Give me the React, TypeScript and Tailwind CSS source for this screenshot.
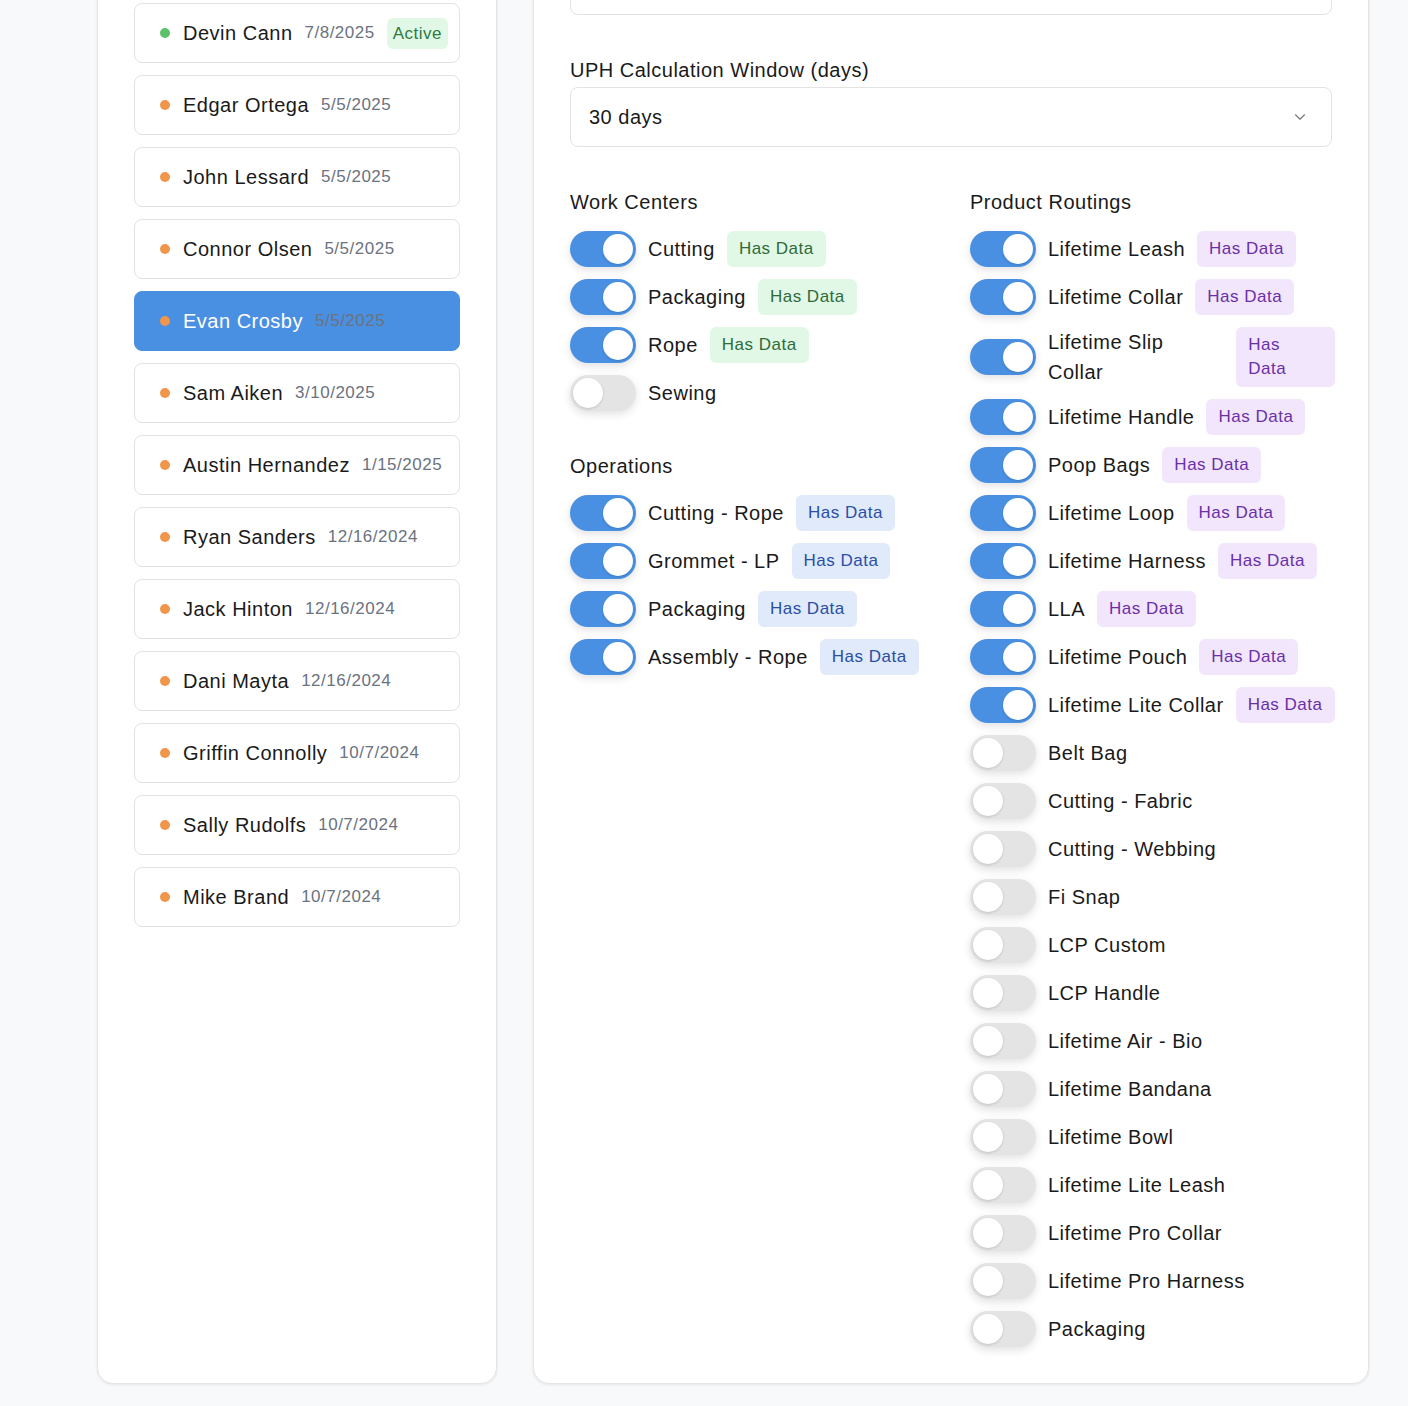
import React, { useState } from 'react';
import { ChevronDown } from 'lucide-react';

type Employee = { name: string; date: string; active?: boolean };

const employees: Employee[] = [
  { name: 'Devin Cann', date: '7/8/2025', active: true },
  { name: 'Edgar Ortega', date: '5/5/2025' },
  { name: 'John Lessard', date: '5/5/2025' },
  { name: 'Connor Olsen', date: '5/5/2025' },
  { name: 'Evan Crosby', date: '5/5/2025' },
  { name: 'Sam Aiken', date: '3/10/2025' },
  { name: 'Austin Hernandez', date: '1/15/2025' },
  { name: 'Ryan Sanders', date: '12/16/2024' },
  { name: 'Jack Hinton', date: '12/16/2024' },
  { name: 'Dani Mayta', date: '12/16/2024' },
  { name: 'Griffin Connolly', date: '10/7/2024' },
  { name: 'Sally Rudolfs', date: '10/7/2024' },
  { name: 'Mike Brand', date: '10/7/2024' },
];

type Item = { name: string; on: boolean };

const workCenters: Item[] = [
  { name: 'Cutting', on: true },
  { name: 'Packaging', on: true },
  { name: 'Rope', on: true },
  { name: 'Sewing', on: false },
];

const operations: Item[] = [
  { name: 'Cutting - Rope', on: true },
  { name: 'Grommet - LP', on: true },
  { name: 'Packaging', on: true },
  { name: 'Assembly - Rope', on: true },
];

const routings: Item[] = [
  { name: 'Lifetime Leash', on: true },
  { name: 'Lifetime Collar', on: true },
  { name: 'Lifetime Slip Collar', on: true },
  { name: 'Lifetime Handle', on: true },
  { name: 'Poop Bags', on: true },
  { name: 'Lifetime Loop', on: true },
  { name: 'Lifetime Harness', on: true },
  { name: 'LLA', on: true },
  { name: 'Lifetime Pouch', on: true },
  { name: 'Lifetime Lite Collar', on: true },
  { name: 'Belt Bag', on: false },
  { name: 'Cutting - Fabric', on: false },
  { name: 'Cutting - Webbing', on: false },
  { name: 'Fi Snap', on: false },
  { name: 'LCP Custom', on: false },
  { name: 'LCP Handle', on: false },
  { name: 'Lifetime Air - Bio', on: false },
  { name: 'Lifetime Bandana', on: false },
  { name: 'Lifetime Bowl', on: false },
  { name: 'Lifetime Lite Leash', on: false },
  { name: 'Lifetime Pro Collar', on: false },
  { name: 'Lifetime Pro Harness', on: false },
  { name: 'Packaging', on: false },
];

const badgeStyles = {
  green: 'bg-[#e2f8e6] text-[#2f6b3b]',
  blue: 'bg-[#e0eafa] text-[#2b4ea6]',
  purple: 'bg-[#f1e6fb] text-[#6a2fa9]',
};

function Toggle({ on }: { on: boolean }) {
  return (
    <div
      className={`shrink-0 w-[66px] h-[36px] rounded-full p-[3px] flex shadow-[0_3px_8px_rgba(0,0,0,0.12)] ${
        on ? 'bg-[#4a90e2] justify-end' : 'bg-[#e4e4e4] justify-start'
      }`}
    >
      <div className="w-[30px] h-[30px] rounded-full bg-white shadow-[0_1px_3px_rgba(0,0,0,0.15)]" />
    </div>
  );
}

function ToggleList({ title, items, color }: { title: string; items: Item[]; color: keyof typeof badgeStyles }) {
  return (
    <div>
      <h3 className="text-[20px] leading-[30px] text-[#1a1a1a] mb-[14px]">{title}</h3>
      <div className="flex flex-col gap-3">
        {items.map((it, i) => (
          <div key={i} className="flex items-center gap-3">
            <Toggle on={it.on} />
            <span className="text-[20px] leading-[30px] text-[#1a1a1a]">{it.name}</span>
            {it.on && (
              <span className={`text-[17px] leading-[24px] px-3 py-1.5 rounded-md ${badgeStyles[color]}`}>
                Has Data
              </span>
            )}
          </div>
        ))}
      </div>
    </div>
  );
}

export default function App() {
  const [selected, setSelected] = useState('Evan Crosby');

  return (
    <div className="min-h-screen bg-[#f8f9fb] font-['Liberation_Sans',Arial,sans-serif] tracking-[0.5px] overflow-hidden">
      <div className="ml-[97px] -mt-[114px] pb-6 flex gap-[36px]">
        {/* employee list */}
        <div className="w-[400px] shrink-0 bg-white border border-[#e5e5e5] rounded-2xl shadow-[0_1px_3px_rgba(0,0,0,0.08)] p-9">
          <h2 className="text-[24px] leading-[32px] font-semibold text-[#1a1a1a] mb-[48px]">Employees</h2>
          <div className="flex flex-col gap-3">
            {employees.map((e) => {
              const isSel = e.name === selected;
              return (
                <div
                  key={e.name}
                  onClick={() => setSelected(e.name)}
                  className={`h-[60px] rounded-lg flex items-center whitespace-nowrap pl-[25px] pr-3 cursor-pointer ${
                    isSel ? 'bg-[#4a90e2] border border-[#4a90e2]' : 'bg-white border border-[#e3e3e3]'
                  }`}
                >
                  <span
                    className={`w-[10px] h-[10px] rounded-full shrink-0 mr-[13px] ${
                      e.active ? 'bg-[#5cc16a]' : 'bg-[#ef964a]'
                    }`}
                  />
                  <span className={`text-[20px] ${isSel ? 'text-white' : 'text-[#1a1a1a]'}`}>{e.name}</span>
                  <span className="text-[17px] text-[#6b7280] ml-3">{e.date}</span>
                  {e.active && (
                    <span className="ml-3 text-[17px] leading-[23px] px-1.5 py-1 rounded-md bg-[#e2f8e6] text-[#2f7a3e]">
                      Active
                    </span>
                  )}
                </div>
              );
            })}
          </div>
        </div>

        {/* settings */}
        <div className="w-[836px] shrink-0 bg-white border border-[#e5e5e5] rounded-2xl shadow-[0_1px_3px_rgba(0,0,0,0.08)] p-9">
          <label className="block text-[20px] leading-[30px] text-[#1a1a1a] mb-[2px]">Target UPH</label>
          <div className="h-[60px] border border-[#e3e3e3] rounded-lg px-[18px] flex items-center text-[20px] text-[#1a1a1a]">
            100
          </div>

          <label className="block mt-10 text-[20px] leading-[30px] text-[#1a1a1a] mb-[2px]">
            UPH Calculation Window (days)
          </label>
          <div className="h-[60px] border border-[#e3e3e3] rounded-lg pl-[18px] pr-[22px] flex items-center justify-between text-[20px] text-[#1a1a1a]">
            <span>30 days</span>
            <ChevronDown size={18} strokeWidth={1.5} className="text-[#777]" />
          </div>

          <div className="mt-10 grid grid-cols-[364px_365px] gap-x-[36px]">
            <div className="flex flex-col gap-10">
              <ToggleList title="Work Centers" items={workCenters} color="green" />
              <ToggleList title="Operations" items={operations} color="blue" />
            </div>
            <ToggleList title="Product Routings" items={routings} color="purple" />
          </div>
        </div>
      </div>
    </div>
  );
}
